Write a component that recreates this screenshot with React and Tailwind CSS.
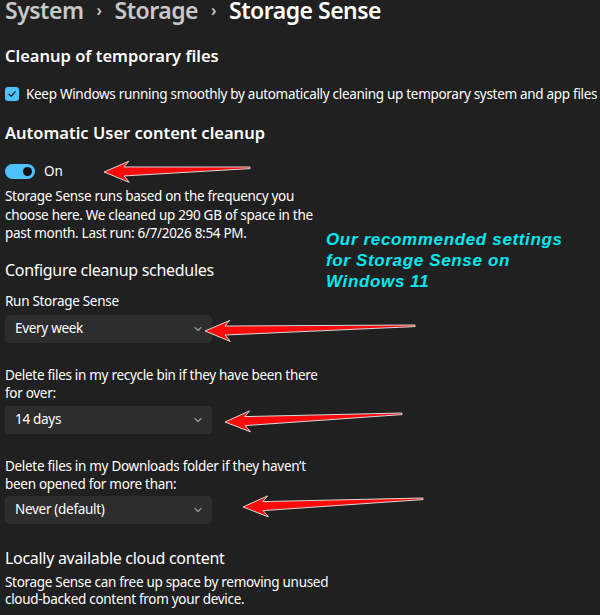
import React from "react";

const font = { fontFamily: '"Noto Sans", "Open Sans", sans-serif' };

function Chevron() {
  return (
    <svg width="10" height="10" viewBox="0 0 10 10" className="text-[#a0a0a0]">
      <path d="M2 3.5 L5 6.5 L8 3.5" fill="none" stroke="currentColor" strokeWidth="1.1" strokeLinecap="round" strokeLinejoin="round" />
    </svg>
  );
}

function Dropdown({ value }) {
  return (
    <div className="flex h-[28px] w-[207px] items-center justify-between rounded-[4px] border border-[#2f2f2f] bg-[#2d2d2d] pl-[9px] pr-[8px] text-[13.5px] tracking-[-0.3px] text-white">
      <span>{value}</span>
      <Chevron />
    </div>
  );
}

// Pointer arrow with a barbed head, tapering toward its tail.
function arrowPoints(tip, tail) {
  const dx = tail[0] - tip[0];
  const dy = tail[1] - tip[1];
  const len = Math.hypot(dx, dy);
  const ux = dx / len;
  const uy = dy / len;
  const px = -uy;
  const py = ux;
  const at = (a, b) => [tip[0] + ux * a + px * b, tip[1] + uy * a + py * b];
  const pts = [
    at(0, 0),
    at(25, -10),
    at(20, -4.5),
    at(len, -1),
    at(len, 0.6),
    at(20, 4.5),
    at(25, 11),
  ];
  return pts.map((p) => p.join(",")).join(" ");
}

const arrows = [
  { tip: [104, 172], tail: [250, 168] },
  { tip: [205, 331], tail: [415, 326] },
  { tip: [225, 422], tail: [402, 414] },
  { tip: [243, 507], tail: [423, 499] },
];

export default function App() {
  return (
    <div className="relative h-[615px] w-[600px] overflow-hidden bg-[#202020] text-white" style={font}>
      <div className="pl-[5px]">
        <div className="flex items-center text-[23px] font-semibold leading-[21px] tracking-[-0.5px]">
          <span className="text-[#c8c8c8]">System</span>
          <span className="mx-[13px] text-[16px] text-[#c8c8c8]">›</span>
          <span className="text-[#c8c8c8]">Storage</span>
          <span className="mx-[13px] text-[16px] text-[#c8c8c8]">›</span>
          <span>Storage Sense</span>
        </div>

        <div className="mt-[23px] text-[16.5px] font-semibold leading-[24px]">Cleanup of temporary files</div>

        <div className="mt-[17px] flex items-center gap-[7px] text-[13.5px] leading-[18px] tracking-[-0.3px]">
          <div className="flex h-[14px] w-[14px] items-center justify-center rounded-[3px] bg-[#4cc2ff]">
            <svg width="10" height="10" viewBox="0 0 10 10">
              <path d="M2 5.2 L4.2 7.3 L8 2.8" fill="none" stroke="#1a1a1a" strokeWidth="1.3" strokeLinecap="round" strokeLinejoin="round" />
            </svg>
          </div>
          <span className="whitespace-nowrap">Keep Windows running smoothly by automatically cleaning up temporary system and app files</span>
        </div>

        <div className="mt-[18px] text-[16.5px] font-semibold leading-[24px]">Automatic User content cleanup</div>

        <div className="mt-[17px] flex items-center gap-[9px] text-[13.5px] leading-[18px]">
          <div className="flex h-[15px] w-[30px] items-center justify-end rounded-full bg-[#4cc2ff] pr-[3px]">
            <div className="h-[9px] w-[9px] rounded-full bg-[#111]" />
          </div>
          <span>On</span>
        </div>

        <div className="mt-[7px] w-[330px] text-[13.5px] leading-[18.5px] tracking-[-0.3px]">
          Storage Sense runs based on the frequency you choose here. We cleaned up 290 GB of space in the past month. Last run: 6/7/2026 8:54 PM.
        </div>

        <div className="mt-[15px] text-[16px] leading-[24px] tracking-[-0.3px]">Configure cleanup schedules</div>
        <div className="mt-[10px] text-[13.5px] leading-[18px] tracking-[-0.3px]">Run Storage Sense</div>
        <div className="mt-[5px]">
          <Dropdown value="Every week" />
        </div>

        <div className="mt-[23px] w-[330px] text-[13.5px] leading-[18px] tracking-[-0.3px]">
          Delete files in my recycle bin if they have been there for over:
        </div>
        <div className="mt-[4px]">
          <Dropdown value="14 days" />
        </div>

        <div className="mt-[23px] w-[330px] text-[13.5px] leading-[18px] tracking-[-0.3px]">
          Delete files in my Downloads folder if they haven’t been opened for more than:
        </div>
        <div className="mt-[3px]">
          <Dropdown value="Never (default)" />
        </div>

        <div className="mt-[22px] text-[16px] leading-[24px] tracking-[-0.3px]">Locally available cloud content</div>
        <div className="mt-[4px] w-[330px] text-[13.5px] leading-[17.5px] tracking-[-0.3px]">
          Storage Sense can free up space by removing unused cloud-backed content from your device.
        </div>
      </div>

      <div
        className="absolute left-[326px] top-[229px] text-[17px] font-bold italic leading-[21px] tracking-[0.65px] text-[#00e8f0]"
        style={{ fontFamily: '"Liberation Sans", Arial, sans-serif' }}
      >
        Our recommended settings
        <br />
        for Storage Sense on
        <br />
        Windows 11
      </div>

      <svg className="pointer-events-none absolute left-0 top-0" width="600" height="615">
        {arrows.map((a, i) => (
          <polygon key={i} points={arrowPoints(a.tip, a.tail)} fill="#ff0a0a" stroke="#d8d8d8" strokeWidth="1" strokeLinejoin="miter" />
        ))}
      </svg>
    </div>
  );
}
